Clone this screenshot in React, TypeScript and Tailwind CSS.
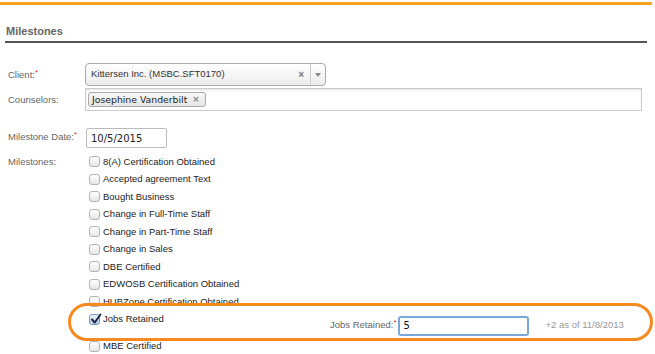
const milestones = [
  "8(A) Certification Obtained",
  "Accepted agreement Text",
  "Bought Business",
  "Change in Full-Time Staff",
  "Change in Part-Time Staff",
  "Change in Sales",
  "DBE Certified",
  "EDWOSB Certification Obtained",
  "HUBZone Certification Obtained",
];

function Req() {
  return <span className="relative -top-[3px] text-[8px] text-[#e0262b]">*</span>;
}

function CheckBox({ checked = false }: { checked?: boolean }) {
  return (
    <span
      className={
        checked
          ? "relative flex h-[11px] w-[11px] shrink-0 items-center justify-center rounded-[3px] border border-[#7f97bb] bg-gradient-to-b from-[#e9f0fa] to-[#b9cbe6]"
          : "flex h-[11px] w-[11px] shrink-0 rounded-[3px] border border-[#b3b3b3] bg-gradient-to-b from-white to-[#e6e6e6]"
      }
    >
      {checked && (
        <svg viewBox="0 0 12 12" className="absolute -top-[2px] left-[0px] h-[12px] w-[12px]">
          <path d="M2 6.5 L4.8 9.5 L10.5 1.5" fill="none" stroke="#1d2a44" strokeWidth="2" strokeLinecap="round" strokeLinejoin="round" />
        </svg>
      )}
    </span>
  );
}

export default function App() {
  return (
    <div className="relative h-[354px] w-[655px] overflow-hidden bg-white font-['Liberation_Sans',Arial,sans-serif] text-[9.5px] text-[#333]">
      <div className="mt-[2px] h-[3px] w-[652px] bg-[#f6a21e]" />

      <div className="ml-[6px] mt-[20px] text-[11px] font-bold leading-[13px] text-[#666]">Milestones</div>
      <div className="ml-[5px] mt-[3px] h-[2px] w-[642px] bg-[#555]" />

      {/* client */}
      <div className="mt-[20px] flex h-[23px] items-start">
        <div className="w-[85px] pl-[8px] pt-[5px] text-[#666]">
          Client:<Req />
        </div>
        <div className="flex h-[23px] w-[241px] items-center rounded-[4px] border border-[#aaa] bg-gradient-to-b from-white to-[#ececec]">
          <span className="flex-1 pl-[5px] text-[#333]">Kittersen Inc. (MSBC.SFT0170)</span>
          <span className="mr-[6px] text-[10px] font-bold leading-none text-[#777]">×</span>
          <span className="flex h-full w-[15px] items-center justify-center border-l border-[#ccc]">
            <span className="mt-[1px] h-0 w-0 border-x-[3px] border-t-[4px] border-x-transparent border-t-[#888]" />
          </span>
        </div>
      </div>

      {/* counselors */}
      <div className="mt-[2px] flex h-[23px] items-start">
        <div className="w-[85px] pl-[8px] pt-[5px] text-[#666]">Counselors:</div>
        <div className="flex h-[23px] w-[557px] items-center border border-[#ccc] pl-[2px] shadow-[inset_0_1px_2px_rgba(0,0,0,0.12)]">
          <span className="flex h-[15px] items-center rounded-[3px] border border-[#aaa] bg-gradient-to-b from-[#f7f7f7] to-[#e6e6e6] pl-[3px] pr-[5px] font-['DejaVu_Sans',sans-serif] text-[9.3px] text-[#222]">
            Josephine Vanderbilt
            <span className="ml-[5px] text-[9px] font-bold text-[#888]">×</span>
          </span>
        </div>
      </div>

      {/* date */}
      <div className="mt-[17px] flex items-start">
        <div className="w-[86px] pl-[8px] pt-[2px] text-[#666]">
          Milestone Date:<Req />
        </div>
        <div className="flex h-[20px] w-[81px] items-center rounded-[2px] border border-[#bbb] pl-[4px] font-['DejaVu_Sans',sans-serif] text-[10px] text-[#222]">
          10/5/2015
        </div>
      </div>

      {/* milestones */}
      <div className="mt-[5px] flex items-start">
        <div className="w-[89px] pl-[8px] leading-[17.5px] text-[#666]">Milestones:</div>
        <div className="flex flex-col">
          {milestones.map((m) => (
            <div key={m} className="flex h-[17.5px] items-center">
              <CheckBox />
              <span className="ml-[3px] text-[#222]">{m}</span>
            </div>
          ))}
          <div className="flex h-[27px] items-start">
            <div className="flex h-[17.5px] w-[241px] items-center">
              <CheckBox checked />
              <span className="ml-[3px] text-[#222]">Jobs Retained</span>
            </div>
            <div className="mt-[5px] flex items-center">
              <span className="text-[#666]">
                Jobs Retained:<Req />
              </span>
              <div className="ml-[1px] flex h-[20px] w-[131px] items-center rounded-[3px] border-2 border-[#7aa6da] pl-[4px] font-['DejaVu_Sans',sans-serif] text-[10px] text-[#111]">
                5
              </div>
              <span className="ml-[17px] text-[#999]">+2 as of 11/8/2013</span>
            </div>
          </div>
          <div className="flex h-[17.5px] items-center">
            <CheckBox />
            <span className="ml-[3px] text-[#222]">MBE Certified</span>
          </div>
        </div>
      </div>

      {/* highlight annotation */}
      <div className="pointer-events-none absolute left-[68px] top-[303px] h-[38px] w-[585px] rounded-[19px] border-[3px] border-[#f7891f]" />
    </div>
  );
}
